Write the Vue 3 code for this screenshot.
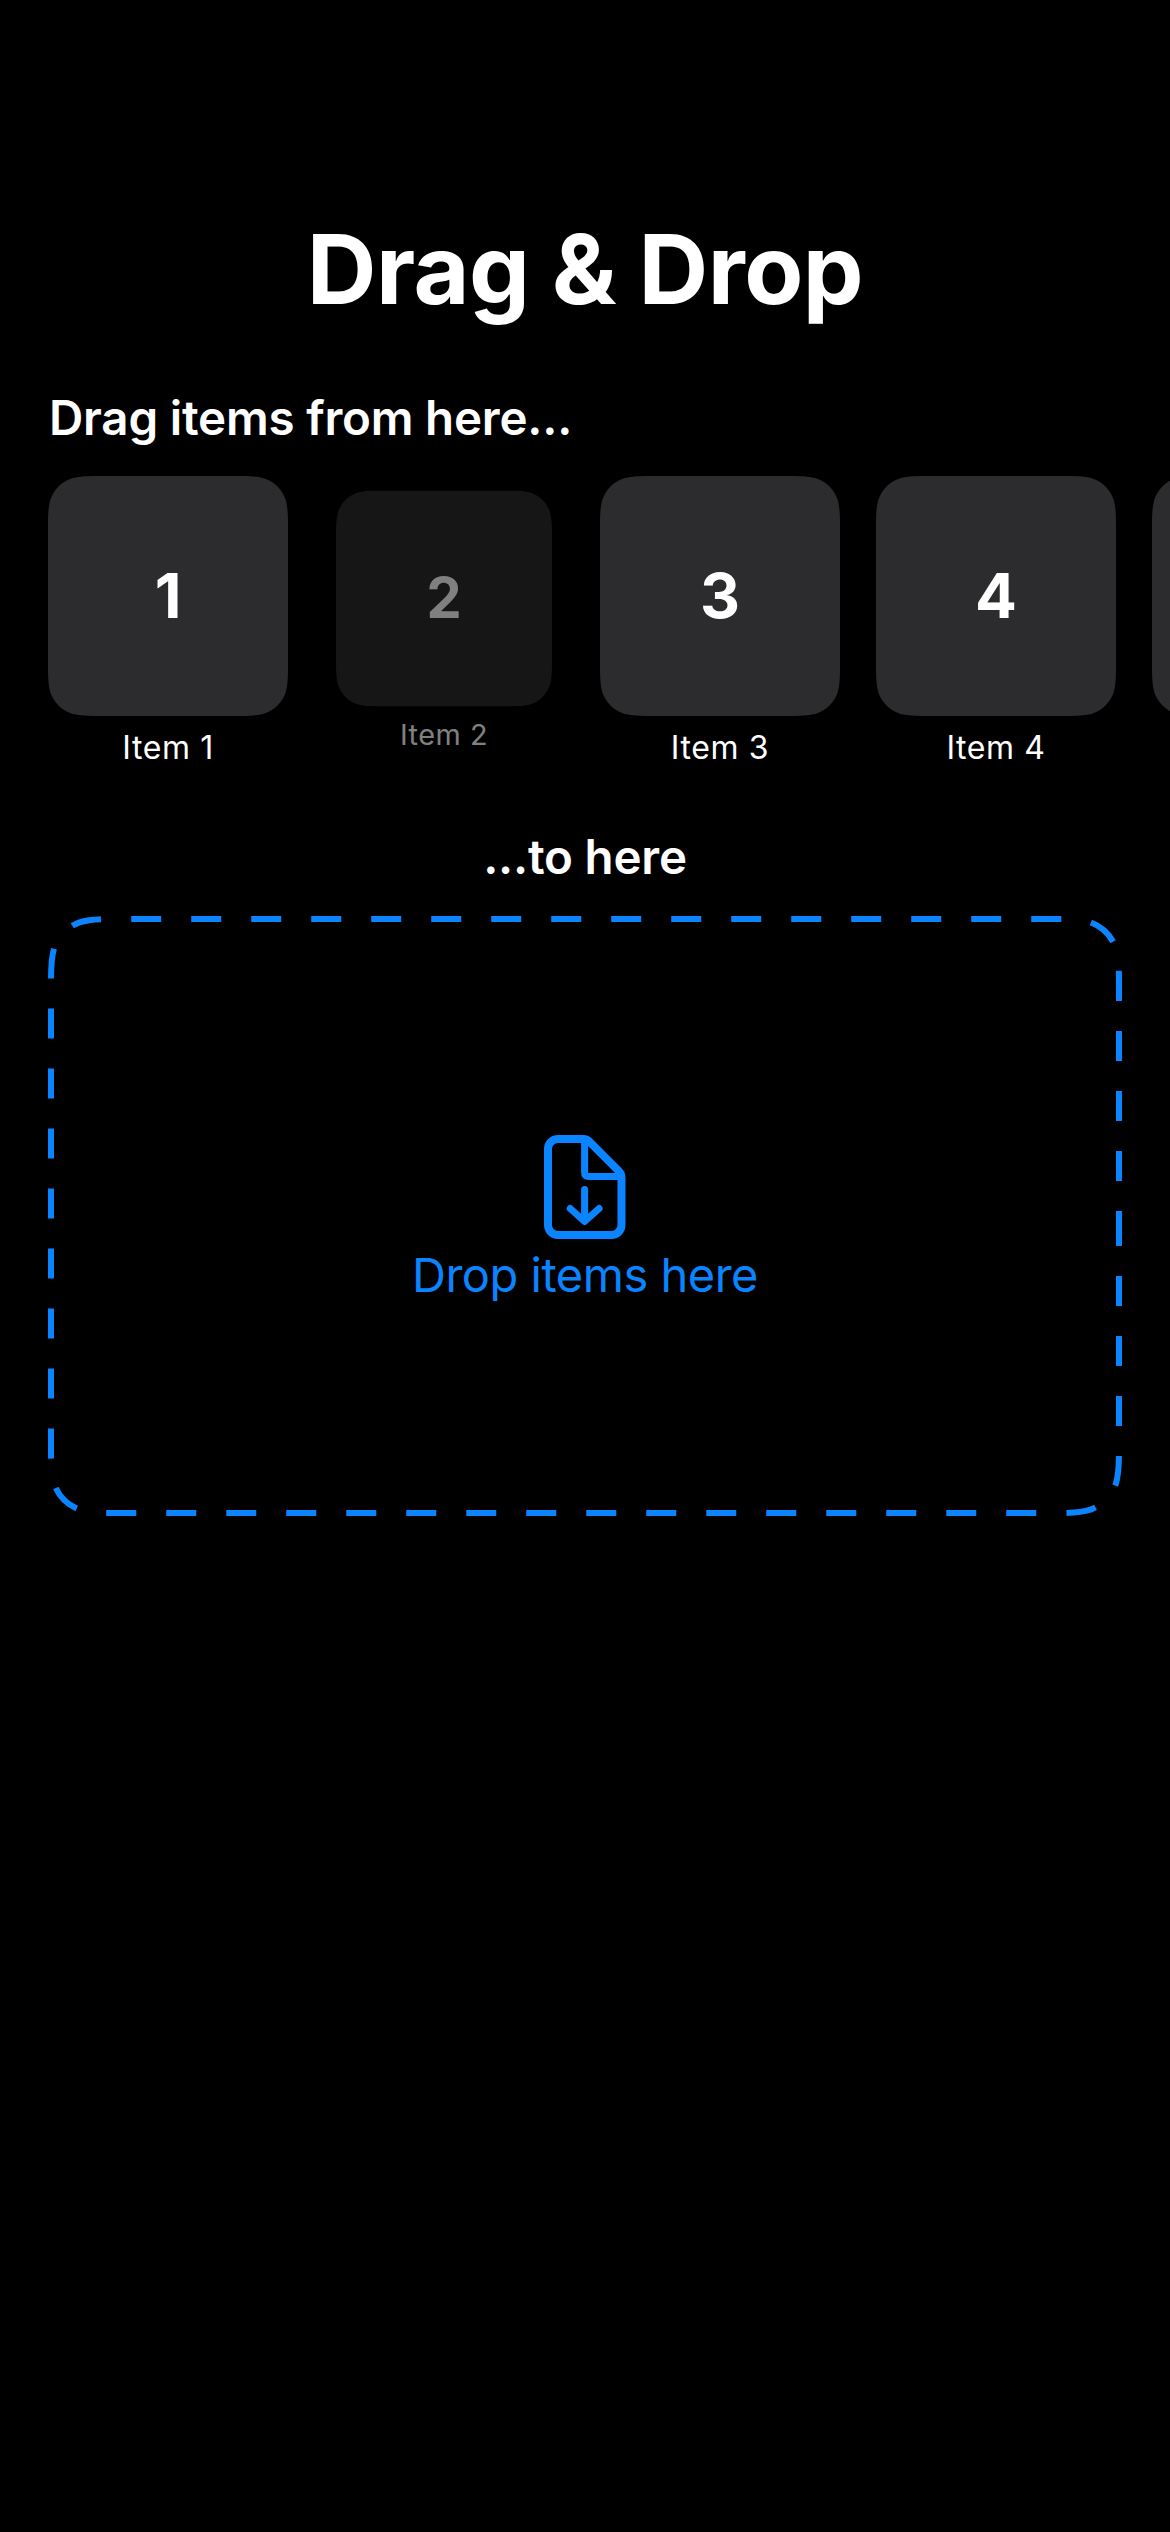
<script setup>
const items = [
  { id: 1, name: 'Item 1' },
  { id: 2, name: 'Item 2', dragged: true },
  { id: 3, name: 'Item 3' },
  { id: 4, name: 'Item 4' },
  { id: 5 }
]

// Continuous ("squircle") rounded rectangle, starting at the middle of the right edge
function squircle(x0, y0, x1, y1, r) {
  const a = 1.52866483 * r
  const b = 1.08849296 * r
  const c = 0.86840694 * r
  const d = 0.63149379 * r
  const e = 0.07491139 * r
  const f = 0.37282383 * r
  const g = 0.16905956 * r
  return [
    `M${x1} ${(y0 + y1) / 2}L${x1} ${y1 - a}`,
    `C${x1} ${y1 - b} ${x1} ${y1 - c} ${x1 - e} ${y1 - d}`,
    `C${x1 - g} ${y1 - f} ${x1 - f} ${y1 - g} ${x1 - d} ${y1 - e}`,
    `C${x1 - c} ${y1} ${x1 - b} ${y1} ${x1 - a} ${y1}`,
    `L${x0 + a} ${y1}`,
    `C${x0 + b} ${y1} ${x0 + c} ${y1} ${x0 + d} ${y1 - e}`,
    `C${x0 + f} ${y1 - g} ${x0 + g} ${y1 - f} ${x0 + e} ${y1 - d}`,
    `C${x0} ${y1 - c} ${x0} ${y1 - b} ${x0} ${y1 - a}`,
    `L${x0} ${y0 + a}`,
    `C${x0} ${y0 + b} ${x0} ${y0 + c} ${x0 + e} ${y0 + d}`,
    `C${x0 + g} ${y0 + f} ${x0 + f} ${y0 + g} ${x0 + d} ${y0 + e}`,
    `C${x0 + c} ${y0} ${x0 + b} ${y0} ${x0 + a} ${y0}`,
    `L${x1 - a} ${y0}`,
    `C${x1 - b} ${y0} ${x1 - c} ${y0} ${x1 - d} ${y0 + e}`,
    `C${x1 - f} ${y0 + g} ${x1 - g} ${y0 + f} ${x1 - e} ${y0 + d}`,
    `C${x1} ${y0 + c} ${x1} ${y0 + b} ${x1} ${y0 + a}Z`
  ].join('')
}

const tilePath = squircle(0, 0, 240, 240, 36)
const zonePath = squircle(3, 3, 1071, 597, 45)
</script>

<template>
  <main class="screen">
    <h1 class="title">Drag &amp; Drop</h1>
    <section class="source">
      <h2 class="heading from">Drag items from here...</h2>
      <div class="row">
        <div v-for="item in items" :key="item.id" class="item" :class="{ dragged: item.dragged }">
          <div class="tile">
            <svg class="shape" viewBox="0 0 240 240"><path :d="tilePath" fill="#2c2c2e" /></svg>
            <span v-if="item.name" class="num">{{ item.id }}</span>
          </div>
          <span v-if="item.name" class="label">{{ item.name }}</span>
        </div>
      </div>
    </section>
    <section class="target">
      <h2 class="heading to">...to here</h2>
      <div class="zone">
        <svg class="shape" viewBox="0 0 1074 600">
          <path :d="zonePath" fill="none" stroke="#0a84ff" stroke-width="6" stroke-dasharray="30" />
        </svg>
        <svg class="doc" viewBox="0 0 82 104" fill="none" stroke="#0a84ff">
          <path
            d="M14 4H39Q43.500 4 46.800 8L75.200 36.500Q77.500 38.800 77.500 43V90A10 10 0 0 1 67.500 100H14A10 10 0 0 1 4 90V14A10 10 0 0 1 14 4Z"
            stroke-width="8"
          />
          <path d="M40.600 5V37.500Q40.600 41.500 44.600 41.500H77" stroke-width="7" />
          <path d="M40.600 54.500V86M26.200 73.500L40.600 86.500L55.100 73.500" stroke-width="7" stroke-linecap="round" stroke-linejoin="round" />
        </svg>
        <span class="hint">Drop items here</span>
      </div>
    </section>
  </main>
</template>

<style>
body {
  margin: 0;
  background: #000;
}
</style>

<style scoped>
.screen {
  box-sizing: border-box;
  width: 1170px;
  height: 2532px;
  padding: 208px 48px 0;
  overflow: hidden;
  background: #000;
  color: #fff;
  font-family: Inter, 'Liberation Sans', sans-serif;
  display: flex;
  flex-direction: column;
}
.title {
  margin: 0;
  height: 122px;
  line-height: 122px;
  font-size: 96.5px;
  font-weight: 700;
  letter-spacing: -0.5px;
  text-align: center;
  white-space: nowrap;
}
.source {
  margin-top: 58px;
}
.heading {
  margin: 0;
  height: 60px;
  line-height: 60px;
  font-size: 47.5px;
  font-weight: 600;
  letter-spacing: -0.2px;
  white-space: nowrap;
}
.from {
  padding-left: 1px;
}
.row {
  margin-top: 28px;
  height: 289px;
  display: flex;
  gap: 36px;
}
.item {
  flex: none;
  width: 240px;
  height: 289px;
  display: flex;
  flex-direction: column;
  align-items: center;
}
.dragged {
  transform: scale(0.9);
  opacity: 0.5;
}
.tile {
  position: relative;
  flex: none;
  width: 240px;
  height: 240px;
  display: flex;
  align-items: center;
  justify-content: center;
}
.shape {
  position: absolute;
  inset: 0;
  width: 100%;
  height: 100%;
}
.num {
  position: relative;
  font-size: 62px;
  line-height: 76px;
  font-weight: 700;
}
.label {
  margin-top: 14px;
  line-height: 35px;
  font-size: 32px;
  letter-spacing: 0.6px;
  white-space: nowrap;
}
.target {
  margin-top: 62px;
}
.to {
  text-align: center;
}
.zone {
  position: relative;
  margin-top: 29px;
  height: 600px;
  display: flex;
  flex-direction: column;
  align-items: center;
}
.doc {
  width: 82px;
  height: 104px;
  margin-top: 219px;
}
.hint {
  margin-top: 6px;
  line-height: 60px;
  font-size: 47px;
  letter-spacing: -0.5px;
  color: #0a84ff;
  white-space: nowrap;
}
</style>
